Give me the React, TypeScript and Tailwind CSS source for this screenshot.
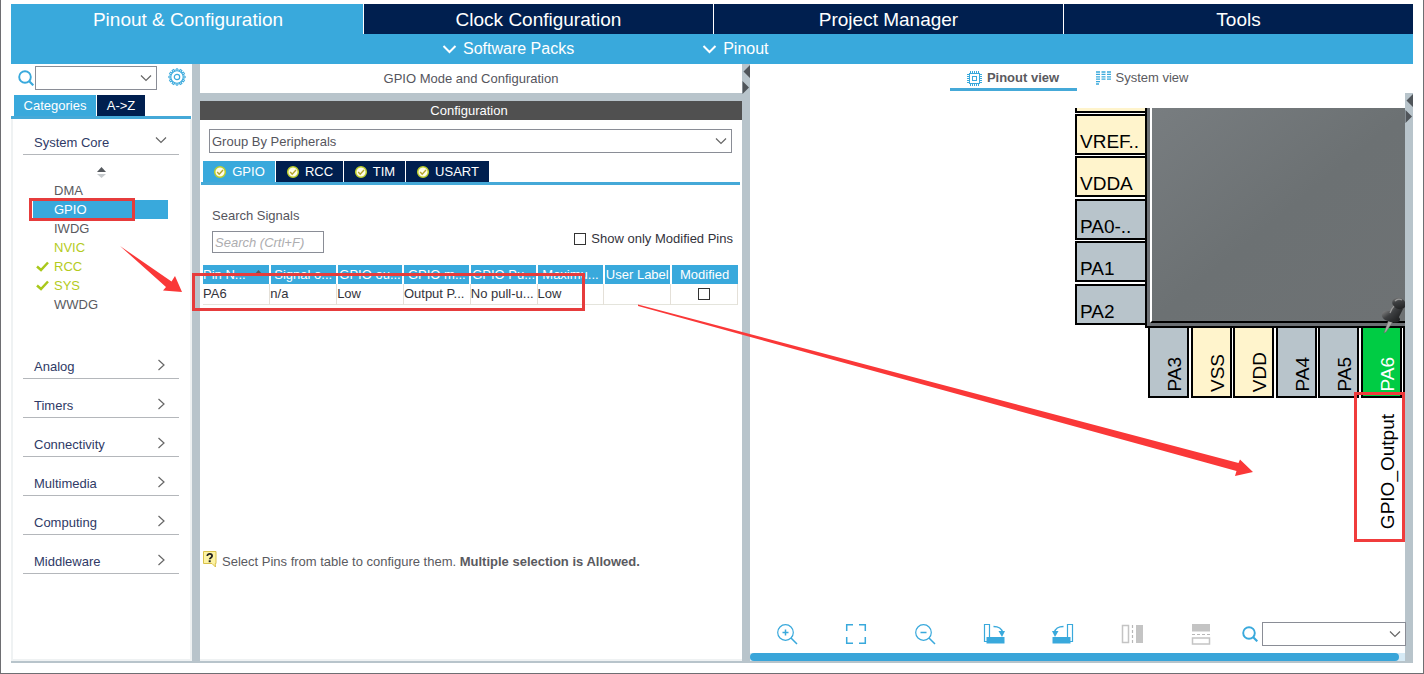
import type { ReactNode } from "react";

const mainTabs = ["Pinout & Configuration", "Clock Configuration", "Project Manager", "Tools"];

const coreItems = [
  { name: "DMA", state: "idle" },
  { name: "GPIO", state: "selected" },
  { name: "IWDG", state: "idle" },
  { name: "NVIC", state: "on" },
  { name: "RCC", state: "checked" },
  { name: "SYS", state: "checked" },
  { name: "WWDG", state: "idle" },
];

const categories = ["Analog", "Timers", "Connectivity", "Multimedia", "Computing", "Middleware"];

const columns = [
  { label: "Pin N...", value: "PA6", sorted: true },
  { label: "Signal o...", value: "n/a" },
  { label: "GPIO ou...", value: "Low" },
  { label: "GPIO m...", value: "Output P..." },
  { label: "GPIO Pu...", value: "No pull-u..." },
  { label: "Maximu...", value: "Low" },
  { label: "User Label", value: "" },
];

const leftPins = [
  { name: "VREF..", place: "top-[6px] bg-[#fff4cc]" },
  { name: "VDDA", place: "top-[48px] bg-[#fff4cc]" },
  { name: "PA0-..", place: "top-[91px] bg-[#b8c4cb]" },
  { name: "PA1", place: "top-[133px] bg-[#b8c4cb]" },
  { name: "PA2", place: "top-[176px] bg-[#b8c4cb]" },
];

const bottomPins = [
  { name: "PA3", place: "left-[398px] bg-[#b8c4cb] text-black" },
  { name: "VSS", place: "left-[441px] bg-[#fff4cc] text-black" },
  { name: "VDD", place: "left-[483px] bg-[#fff4cc] text-black" },
  { name: "PA4", place: "left-[526px] bg-[#b8c4cb] text-black" },
  { name: "PA5", place: "left-[568px] bg-[#b8c4cb] text-black" },
  { name: "PA6", place: "left-[611px] bg-[#00cc44] text-white" },
];

function Chevron({ dir = "down", className = "" }: { dir?: "down" | "right"; className?: string }) {
  return (
    <svg width="12" height="12" viewBox="0 0 12 12" fill="none" stroke="currentColor" strokeWidth="1.2" className={className} aria-hidden="true">
      <path d={dir === "down" ? "M1 3.5 6 8.5 11 3.5" : "M3.5 1 9 6 3.5 11"} />
    </svg>
  );
}

function SearchIcon({ className = "" }: { className?: string }) {
  return (
    <svg width="16" height="16" viewBox="0 0 16 16" fill="none" stroke="#39a9dc" className={className} aria-hidden="true">
      <circle cx="7" cy="7" r="5.8" strokeWidth="1.9" />
      <path d="m11 11 4.300 4.300" strokeWidth="2.2" />
    </svg>
  );
}

function GearIcon() {
  const teeth = Array.from({ length: 12 }, (_, i) => i * 30);
  return (
    <svg width="18" height="18" viewBox="0 0 18 18" fill="none" stroke="#39a9dc" aria-hidden="true">
      <circle cx="9" cy="9" r="6.2" strokeWidth="1.1" />
      <circle cx="9" cy="9" r="2.7" strokeWidth="1.2" />
      {teeth.map((a) => (
        <path key={a} d="M8 2.800V.9h2v1.900" strokeWidth="1" transform={`rotate(${a} 9 9)`} />
      ))}
    </svg>
  );
}

function OkBadge() {
  return (
    <svg width="14" height="14" viewBox="0 0 14 14" fill="none" aria-hidden="true">
      <circle cx="7" cy="7" r="5.3" fill="#fffde8" stroke="#bccf2a" strokeWidth="1.5" />
      <path d="m4.200 7 2 2.200L10 5" stroke="#b5a52c" strokeWidth="1.4" />
    </svg>
  );
}

function ChipIcon() {
  const pins = [3.5, 5.5, 7.5, 9.5, 11.5];
  return (
    <svg width="15" height="15" viewBox="0 0 15 15" fill="none" stroke="#39a9dc" aria-hidden="true">
      <rect x="2.500" y="2.500" width="10" height="10" />
      <rect x="5.500" y="5.500" width="4" height="4" />
      {pins.map((p) => (
        <path key={p} d={`M${p} 0v2M${p} 13v2M0 ${p}h2M13 ${p}h2`} />
      ))}
    </svg>
  );
}

function SystemIcon() {
  return (
    <svg width="15" height="14" viewBox="0 0 15 14" fill="none" stroke="#39a9dc" strokeWidth="1.3" aria-hidden="true">
      <path d="M0 1h4M5.500 1h4M11 1h4M0 3.400h4M5.500 3.400h4M11 3.400h4M0 5.800h4M5.500 5.800h4M11 5.800h4M0 8.200h4M5.500 8.200h4M11 8.200h4M0 10.600h4M0 13h3" />
    </svg>
  );
}

function HelpIcon() {
  return (
    <svg width="14" height="17" viewBox="0 0 14 17" aria-hidden="true" className="shrink-0">
      <path d="M.5.5h12.500v12h-.8l.3 3.500-3.500-3.500H.5z" fill="#fdf3a3" stroke="#d9c14a" />
      <path d="M4.300 5c0-3 4.800-2.800 4.800 0 0 1.700-2.400 1.600-2.400 3.300" fill="none" stroke="#222" strokeWidth="1.8" />
      <rect x="5.700" y="9.300" width="2" height="1.900" fill="#222" />
    </svg>
  );
}

function Pushpin() {
  return (
    <svg width="26" height="38" viewBox="0 0 26 38" className="absolute left-[631px] top-[189px]" aria-hidden="true">
      <defs>
        <linearGradient id="pinHead" x1="0" y1="0" x2="1" y2="1">
          <stop offset="0" stopColor="#8a8a8a" />
          <stop offset=".4" stopColor="#3d3f41" />
          <stop offset="1" stopColor="#18191a" />
        </linearGradient>
      </defs>
      <path d="m8 22-5 14 2-1 8-12z" fill="#a9aaa6" stroke="#666" strokeWidth=".5" />
      <path d="M1 17c1-4 6-4 9-2 3 1 10 5 9 8-2 4-8 3-12 1-4-1-7-4-6-7z" fill="url(#pinHead)" />
      <path d="m8 15 5-8 9 5-5 10c-4 1-9-2-9-7z" fill="url(#pinHead)" />
      <ellipse cx="18" cy="6.500" rx="7" ry="5.500" fill="url(#pinHead)" transform="rotate(25 18 6.500)" />
      <path d="M9 16c1-3 2-5 4-7M14 4c2-2 5-2 7-1" stroke="#999" strokeWidth="1.200" fill="none" />
    </svg>
  );
}

function ToolButton({ label, children }: { label: string; children: ReactNode }) {
  return (
    <button type="button" aria-label={label} className="size-[22px] shrink-0">
      <svg width="22" height="22" viewBox="0 0 22 22" fill="none" stroke="#39a9dc" strokeWidth="1.2" aria-hidden="true">
        {children}
      </svg>
    </button>
  );
}

function Combo({ label, value = "" }: { label: string; value?: string }) {
  return (
    <div className="relative min-w-0 flex-1">
      <select aria-label={label} className="block h-6 w-full appearance-none border border-[#8a8d96] bg-white pl-[2px] pt-px text-[13px] leading-4 text-[#55555d] outline-none">
        <option>{value}</option>
      </select>
      <Chevron className="pointer-events-none absolute right-[5px] top-[6px] text-[#666]" />
    </div>
  );
}

function SplitArrows() {
  return (
    <svg width="8" height="32" viewBox="0 0 8 32" fill="#50555a" aria-hidden="true">
      <path d="M8 1v13L1.500 7.500zM.5 17v13l6.500-6.500z" />
    </svg>
  );
}

function Sidebar() {
  return (
    <nav className="flex w-[181px] shrink-0 flex-col bg-white">
      <div className="flex h-[31px] items-start pl-[7px] pt-[2px]">
        <SearchIcon className="mt-1" />
        <div className="ml-px flex w-[122px]">
          <Combo label="Search peripherals" />
        </div>
        <button type="button" aria-label="Settings" className="ml-[11px] mt-[2px]">
          <GearIcon />
        </button>
      </div>
      <div className="mr-px flex gap-px border-b-[3px] border-[#45a9d8] pl-[3px] text-[13px] leading-[21px] text-white">
        <button type="button" className="w-[82px] bg-[#39a9dc]">Categories</button>
        <button type="button" className="w-12 bg-[#001f4f]">A-&gt;Z</button>
      </div>
      <div className="flex-1 border-x-2 border-b-2 border-[#eff2f3] pl-[10px] pr-[11px] text-[13px]">
        <button type="button" className="flex h-9 w-full items-center justify-between border-b border-[#b4b7bb] pl-[11px] pr-3 pt-3 text-[#2f3a66]">
          System Core
          <Chevron className="mb-[5px] text-[#666]" />
        </button>
        <div className="flex h-[26px] items-center justify-center">
          <svg width="9" height="12" viewBox="0 0 9 12" className="mt-[10px]" aria-hidden="true">
            <path d="M4.500 0 9 5H0z" fill="#55595e" />
            <path d="M0 7h9l-4.500 4z" fill="#c6cacd" />
          </svg>
        </div>
        <ul className="mb-[26px]">
          {coreItems.map((it) => (
            <li key={it.name} className="relative ml-[10px] mr-[11px]">
              <button
                type="button"
                className={
                  it.state === "selected"
                    ? "flex h-[19px] w-full items-center bg-[#39a9dc] pl-[21px] text-white"
                    : it.state === "idle"
                      ? "flex h-[19px] w-full items-center pl-[21px] text-[#5a5a60]"
                      : "flex h-[19px] w-full items-center pl-[21px] text-[#b4cb1d]"
                }
              >
                {it.name}
              </button>
              {it.state === "checked" && (
                <svg width="13" height="11" viewBox="0 0 13 11" className="absolute left-[3px] top-1" fill="none" aria-hidden="true">
                  <path d="m1 5.500 4 3.500L12 1.500" stroke="#a9c81b" strokeWidth="2.500" />
                </svg>
              )}
              {it.state === "selected" && <span className="absolute -left-1 -top-[2px] h-[23px] w-[106px] border-[3px] border-[#e63c3c]" />}
            </li>
          ))}
        </ul>
        {categories.map((c) => (
          <button key={c} type="button" className="flex h-[39px] w-full items-center justify-between border-b border-[#b4b7bb] pl-[11px] pr-3 pt-4 text-[#2f3a66]">
            {c}
            <Chevron dir="right" className="mb-[5px] text-[#666]" />
          </button>
        ))}
      </div>
    </nav>
  );
}

function SignalTabs() {
  const tabs = [
    { name: "GPIO", look: "w-[72px] bg-[#39a9dc]" },
    { name: "RCC", look: "w-[67px] bg-[#001f4f]" },
    { name: "TIM", look: "w-[61px] bg-[#001f4f]" },
    { name: "USART", look: "w-[83px] bg-[#001f4f]" },
  ];
  return (
    <div className="mr-[2px] ml-px flex gap-px border-b-[3px] border-[#45a9d8] pl-[2px] text-[13px] leading-[21px] text-white">
      {tabs.map((t) => (
        <button key={t.name} type="button" className={`flex items-center justify-center gap-[5px] ${t.look}`}>
          <OkBadge />
          {t.name}
        </button>
      ))}
    </div>
  );
}

function ConfigPanel() {
  return (
    <section className="flex w-[542px] shrink-0 flex-col bg-white text-[13px]">
      <h2 className="h-[29px] text-center leading-[29px] text-[#55555d]">GPIO Mode and Configuration</h2>
      <div className="h-2 bg-[#b8c4cb]" />
      <h3 className="h-[19px] bg-[#505050] pr-1 text-center leading-[19px] text-white">Configuration</h3>
      <div className="mb-2 ml-[9px] mr-[10px] mt-[9px] flex">
        <Combo label="Grouping" value="Group By Peripherals" />
      </div>
      <SignalTabs />
      <div className="flex h-20 items-end justify-between pb-3 pl-3 pr-[9px]">
        <div className="flex flex-col gap-[7px]">
          <label htmlFor="signals" className="leading-4 text-[#55555d]">Search Signals</label>
          <input id="signals" placeholder="Search (Crtl+F)" className="h-[22px] w-[112px] border border-[#8a8d96] px-[2px] italic outline-none placeholder:text-[#adadb0]" />
        </div>
        <label className="mb-[6px] flex items-center gap-[5px] leading-4 text-[#33333b]">
          <input type="checkbox" className="size-3 appearance-none border border-[#333] bg-white" />
          Show only Modified Pins
        </label>
      </div>
      <div className="relative ml-[3px] mr-1">
        <table className="w-full table-fixed border-collapse text-left">
          <thead>
            <tr className="h-[19px] bg-[#39a9dc] leading-[19px] text-white">
              {columns.map((c) => (
                <th
                  key={c.label}
                  className={
                    c.sorted
                      ? "whitespace-nowrap border-r-2 border-white p-0 text-left font-normal"
                      : "whitespace-nowrap border-r-2 border-white p-0 text-center font-normal"
                  }
                >
                  {c.label}
                  {c.sorted && (
                    <svg width="9" height="5" viewBox="0 0 9 5" className="mb-[6px] ml-2 inline-block" aria-hidden="true">
                      <path d="M4.500 0 9 5H0z" fill="#55595e" />
                    </svg>
                  )}
                </th>
              ))}
              <th className="p-0 text-center font-normal">Modified</th>
            </tr>
          </thead>
          <tbody>
            <tr className="h-5 border-b border-[#e4e4dc] leading-[19px] text-[#33333b]">
              {columns.map((c) => (
                <td key={c.label} className="whitespace-nowrap border-r border-[#e4e0d8] p-0">{c.value}</td>
              ))}
              <td className="border-r border-[#e4e0d8] p-0">
                <input type="checkbox" aria-label="Modified" className="mx-auto block size-3 appearance-none border border-[#333] bg-white" />
              </td>
            </tr>
          </tbody>
        </table>
        <span className="pointer-events-none absolute -left-[11px] top-2 z-10 h-[38px] w-[393px] border-[3px] border-[#e63c3c]" />
      </div>
      <div className="mt-auto flex h-[113px] items-start gap-[5px] border-b-2 border-[#eff2f3] pl-[3px] pt-[3px] text-[#5a5a60]">
        <HelpIcon />
        <p className="pt-[3px] leading-4">
          Select Pins from table to configure them. <b>Multiple selection is Allowed.</b>
        </p>
      </div>
    </section>
  );
}

function ChipCanvas() {
  return (
    <div className="relative mt-[17px] min-h-[440px] flex-1 overflow-hidden text-[19px] leading-5">
      <div className="absolute left-[325px] top-0 h-[5px] w-[72px] border-x-2 border-b-2 border-black bg-[#fff4cc]" />
      {leftPins.map((p) => (
        <div key={p.name} className={`absolute left-[325px] flex h-[41px] w-[72px] items-end border-2 border-black pb-px pl-[3px] text-black ${p.place}`}>
          {p.name}
        </div>
      ))}
      <div className="absolute -right-2 left-[395px] top-0 h-[220px] border-b-2 border-l-2 border-black bg-[#6c7074]" />
      <div className="absolute -right-2 left-[400px] top-0 h-[215px] border-b-2 border-l-2 border-b-black border-l-white bg-linear-to-br from-[#787d80] via-[#6c7173] to-[#6e7274]" />
      {bottomPins.map((p) => (
        <div key={p.name} className={`absolute top-[218px] flex h-[72px] w-[41px] items-end justify-end border-2 border-black pb-1 pr-[2px] ${p.place}`}>
          <span className="rotate-180 [writing-mode:vertical-rl]">{p.name}</span>
        </div>
      ))}
      <div className="absolute left-[653px] top-[218px] h-[72px] w-3 border-2 border-black bg-[#fff4cc]" />
      <span className="absolute left-[628px] top-[306px] rotate-180 text-black [writing-mode:vertical-rl]">GPIO_Output</span>
      <Pushpin />
      <span className="absolute left-[604px] top-[284px] h-[150px] w-[51px] border-[3px] border-[#f03c3c]" />
    </div>
  );
}

function CanvasTools() {
  return (
    <div className="flex h-6 items-center gap-[47px] pl-[26px]">
      <ToolButton label="Zoom in">
        <circle cx="9.500" cy="9.500" r="7.800" />
        <path d="m15 15 6 6M9.500 6.500v6M6.500 9.500h6" strokeWidth="1.5" />
      </ToolButton>
      <ToolButton label="Fit to window">
        <path d="M8 1.700H1.700V8M14 1.700h6.300V8M8 20.300H1.700V14M14 20.300h6.300V14" strokeWidth="1.500" />
      </ToolButton>
      <ToolButton label="Zoom out">
        <circle cx="9.500" cy="9.500" r="7.800" />
        <path d="m15 15 6 6M6.500 9.500h6" strokeWidth="1.5" />
      </ToolButton>
      <ToolButton label="Rotate clockwise">
        <path d="M1.500 1.500h5v17h-5z" />
        <path d="M3.500 14h18v6.500h-18z" fill="#39a9dc" stroke="none" />
        <path d="M10.500 3.500c5 0 8.500 2.500 9 6" strokeWidth="1.500" />
        <path d="M15.500 8h6.500l-3 6z" fill="#39a9dc" stroke="none" />
      </ToolButton>
      <ToolButton label="Rotate counterclockwise">
        <path d="M15.500 1.500h5v17h-5z" />
        <path d="M.5 14h18v6.500H.5z" fill="#39a9dc" stroke="none" />
        <path d="M11.500 3.500c-5 0-8.500 2.500-9 6" strokeWidth="1.500" />
        <path d="M0 8h6.500l-3.500 6z" fill="#39a9dc" stroke="none" />
      </ToolButton>
      <ToolButton label="Flip horizontally">
        <path d="M1.500 2.500h6v17h-6z" stroke="#c4c4c4" strokeWidth="1.500" />
        <path d="M11.500 2v18" stroke="#b8b8b8" strokeDasharray="3 2" />
        <path d="M15 2h7v18h-7z" fill="#c4c4c4" stroke="none" />
      </ToolButton>
      <ToolButton label="Flip vertically">
        <path d="M2 1h18v7.500H2z" fill="#c4c4c4" stroke="none" />
        <path d="M2 11.500h18" stroke="#b8b8b8" strokeDasharray="3 2" />
        <path d="M2.500 15h17v6h-17z" stroke="#c4c4c4" strokeWidth="1.500" />
      </ToolButton>
      <div className="-ml-[17px] flex min-w-0 flex-1 items-center gap-1">
        <SearchIcon className="shrink-0" />
        <div className="-mr-px flex flex-1">
          <Combo label="Find pin" />
        </div>
      </div>
    </div>
  );
}

function PinoutPanel() {
  return (
    <section className="flex min-w-0 flex-1 bg-white">
      <div className="flex min-w-0 flex-1 flex-col">
        <div className="flex h-[27px] justify-center pl-[2px] text-[13px] text-[#5a5a60]">
          <button type="button" className="flex w-[127px] items-center justify-center gap-[5px] border-b-[3px] border-[#45a9d8] pt-1 font-bold">
            <ChipIcon />
            Pinout view
          </button>
          <button type="button" className="flex w-[131px] items-center justify-center gap-[5px] border-b-[3px] border-transparent pt-1">
            <SystemIcon />
            System view
          </button>
        </div>
        <ChipCanvas />
        <CanvasTools />
        <div className="mt-[7px] h-2 bg-[#d6eaf5]">
          <div className="mr-[6px] h-2 rounded-full bg-[#39a5d9]" />
        </div>
      </div>
      <div className="mt-[29px] w-2 shrink-0 bg-[#b8c4cb]">
        <SplitArrows />
      </div>
    </section>
  );
}

export default function App() {
  return (
    <div className="relative flex min-h-screen flex-col border-x border-b border-[#6e6e72] bg-white pb-[10px] pl-[10px] pr-[10px] pt-1 font-['Liberation_Sans',Arial,sans-serif]">
      <header className="text-white">
        <div className="grid h-[30px] grid-cols-[352fr_350fr_350fr_350fr] text-[19px] leading-7">
          {mainTabs.map((t, i) => (
            <button key={t} type="button" className={i === 0 ? "bg-[#39a9dc] pl-[2px] pt-px" : "border-l border-white bg-[#001f4f] pt-px"}>
              {t}
            </button>
          ))}
        </div>
        <div className="flex h-[30px] items-center gap-[128px] bg-[#39a9dc] pl-[431px] text-base">
          {["Software Packs", "Pinout"].map((t) => (
            <button key={t} type="button" className="flex items-center gap-[6px]">
              <svg width="15" height="10" viewBox="0 0 15 10" fill="none" stroke="white" strokeWidth="2" aria-hidden="true">
                <path d="m1.500 2 6 6 6-6" />
              </svg>
              {t}
            </button>
          ))}
        </div>
      </header>
      <main className="flex flex-1 border-b-2 border-[#b8c4cb]">
        <Sidebar />
        <div className="w-2 shrink-0 bg-[#b8c4cb]" />
        <ConfigPanel />
        <div className="w-2 shrink-0 bg-[#b8c4cb]">
          <SplitArrows />
        </div>
        <PinoutPanel />
      </main>
      <svg width="1300" height="520" viewBox="0 0 1300 520" fill="#fa3838" className="pointer-events-none absolute -left-px top-0" aria-hidden="true">
        <path d="m120 246 51.500 35.500 3.500-5.500 7 16-19-1.500 3-3.500z" />
        <path d="m638 304.500 600.500 158.500 1.500-3.500L1253 472l-18 4 1.500-5L638 306z" />
      </svg>
    </div>
  );
}
